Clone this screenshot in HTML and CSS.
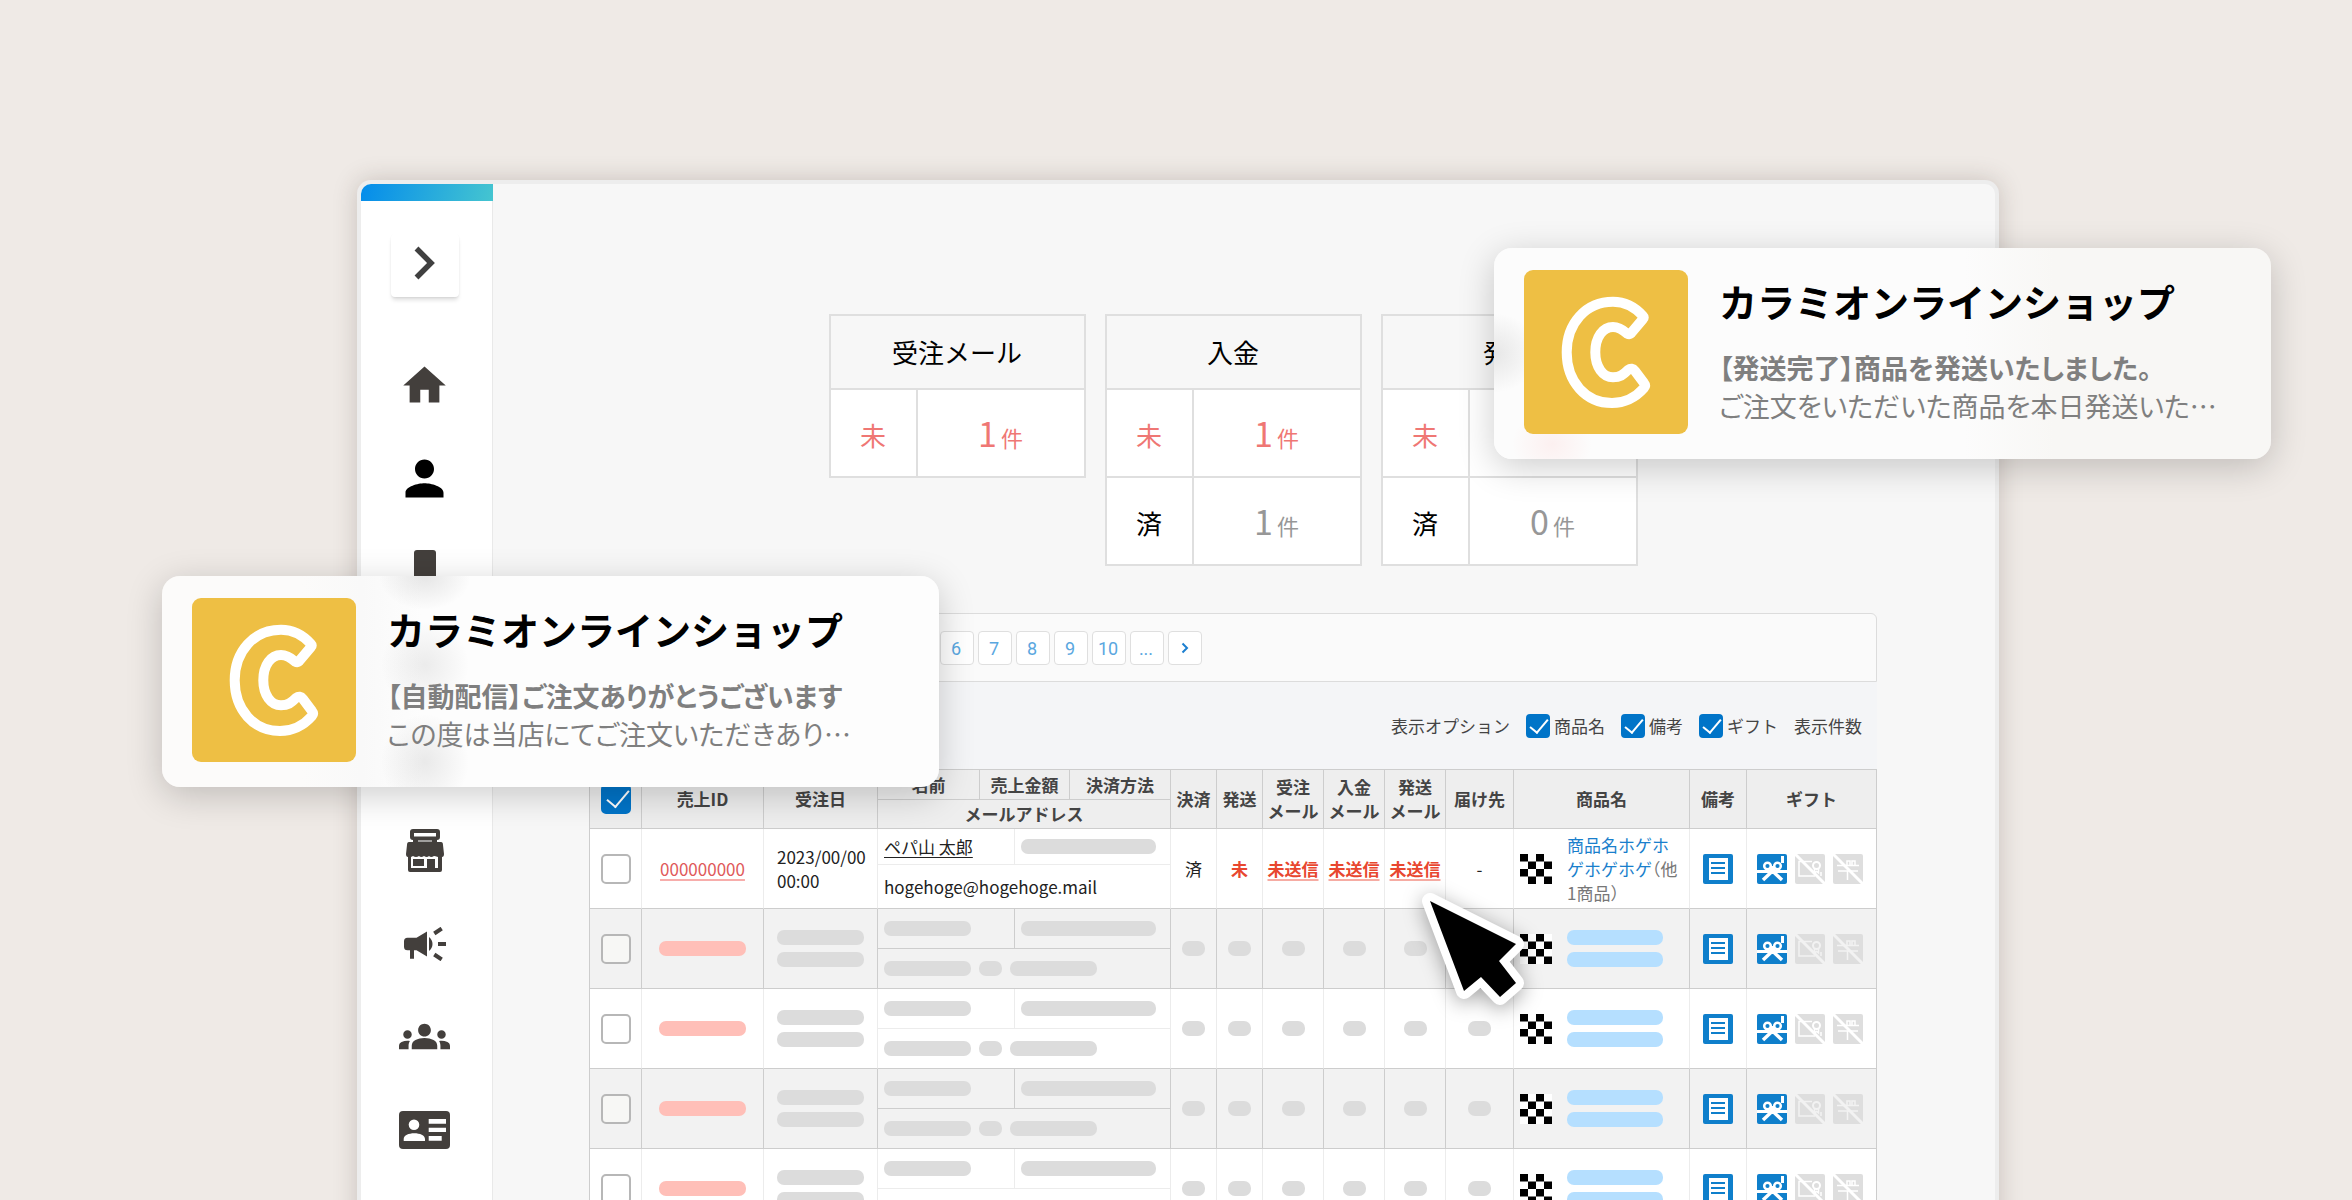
FILE: index.html
```html
<!DOCTYPE html>
<html lang="ja">
<head>
<meta charset="utf-8">
<meta name="viewport" content="width=device-width, initial-scale=1">
<title>売上一覧</title>
<link rel="stylesheet" href="styles.css">
</head>
<body>
<svg class="sprite" aria-hidden="true">
  <symbol id="i-logo" viewBox="0 0 164 164">
    <path d="M119 46C111 37 101 31.700 89 31.700C62 31.700 42.700 53 42.700 82.300C42.700 112 62 133 88 133C101 133 112 127 120 118Q122 115.500 120 113L111 101Q108 97 104 100C99 105 96 107.300 89 107.300C79 107.300 71.300 97 71.300 82.300C71.300 67 79 57 89 57C95 57 99 60 103 63.500Q106 65 108 62L119 49Q120.500 47.500 119 46Z" fill="none" stroke="#fff" stroke-width="10" stroke-linejoin="round"/>
  </symbol>
  <symbol id="i-checker" viewBox="0 0 32 32" preserveAspectRatio="none">
    <path fill="#fff" d="M0 0h32v32H0z"/>
    <path d="M0 0h8v8H0zM16 0h8v8h-8zM8 8h8v8H8zM24 8h8v8h-8zM0 16h8v8H0zM16 16h8v8h-8zM8 24h8v8H8zM24 24h8v8h-8z"/>
  </symbol>
  <symbol id="i-memo" viewBox="0 0 30 30">
    <rect width="30" height="30" rx="2" fill="#0f7fcb"/>
    <path fill="#fff" d="M6 4h19v22H6z"/>
    <path stroke="#0f7fcb" stroke-width="2" d="M8 9h14M8 14h14M8 19h14"/>
  </symbol>
  <symbol id="i-wrap" viewBox="0 0 30 30">
    <rect width="30" height="30" rx="2" fill="#0f7fcb"/>
    <g fill="none" stroke="#fff">
      <path stroke-width="3" d="M0 17.500h30"/>
      <path stroke-width="3.500" d="M15.500 17L6 26M15.500 17L25 26"/>
      <circle cx="10.500" cy="12" r="3.300" stroke-width="2.500"/>
      <circle cx="20.500" cy="12" r="3.300" stroke-width="2.500"/>
    </g>
    <path fill="#fff" d="M13 12h5v8h-5zM24 2h3v7h-3z"/>
  </symbol>
  <symbol id="i-card-off" viewBox="0 0 30 30">
    <rect width="30" height="30" rx="2" fill="#dedede"/>
    <g fill="none" stroke="currentColor">
      <path stroke-width="1.500" d="M17 7.500H4V22h16M26 18v4"/>
      <circle cx="21.500" cy="11.500" r="3.500" stroke-width="2"/>
      <path stroke-width="1.500" d="M19.500 15v4l2-1.500 2 1.500v-4"/>
      <path stroke-width="3" d="M0 0l30 30"/>
    </g>
  </symbol>
  <symbol id="i-box-off" viewBox="0 0 30 30">
    <rect width="30" height="30" rx="2" fill="#dedede"/>
    <g fill="none" stroke="currentColor">
      <path stroke-width="1.500" d="M4 11.500h22M5 17h20M14.500 17v9"/>
      <path stroke-width="1.500" d="M14 11V7h3v4M19 11V7h3v4"/>
      <path stroke-width="3" d="M0 0l30 30"/>
    </g>
  </symbol>
</svg>

<main class="scene">
  <div class="window">
    <aside class="sidebar">
      <button class="toggle" type="button" aria-label="メニューを開く">
        <svg width="22" height="34" viewBox="0 0 22 34"><path d="M2.500 2.500l14.500 14.500L2.500 31.500" fill="none" stroke="#404040" stroke-width="5.500"/></svg>
      </button>
      <nav class="menu" aria-label="メインメニュー">
        <a href="#" aria-label="ホーム"><svg width="51" height="51" viewBox="0 0 24 24"><path d="M10 20v-6h4v6h5v-8h3L12 3 2 12h3v8z"/></svg></a>
        <a class="current" href="#" aria-label="顧客"><svg width="57" height="57" viewBox="0 0 24 24"><path d="M12 12c2.210 0 4-1.790 4-4s-1.790-4-4-4-4 1.790-4 4 1.790 4 4 4zm0 2c-2.670 0-8 1.340-8 4v2h16v-2c0-2.660-5.330-4-8-4z"/></svg></a>
        <a href="#" aria-label="モバイル"><svg width="22" height="44" viewBox="0 0 22 44"><rect width="22" height="44" rx="3"/></svg></a>
        <a href="#" aria-label="商品"><svg width="40" height="40" viewBox="0 0 40 40"><rect width="40" height="40" rx="4"/></svg></a>
        <a href="#" aria-label="売上"><svg width="36" height="46" viewBox="0 0 36 46"><rect width="36" height="46" rx="4"/></svg></a>
        <a href="#" aria-label="ショップ"><svg width="38" height="43" viewBox="0 0 38 43"><path fill-rule="evenodd" d="M7 0h24q3 0 3 3v5q0 3-3 3v2h4q2 0 2 3l1 9q0 3-2 3v13q0 2-2 2H4q-2 0-2-2V28q-2 0-2-3l1-9q0-3 2-3h4v-2q-3 0-3-3V3q0-3 3-3zM8 4v3.500h22V4zM12 11.500v1h14v-1zM5 28v11h16v-9h8v9h3V28q-3-1-4-1-3 2-5 0-2 2-5 0-3 2-5 0-3 2-6 0zM7 30h11v7H7z"/></svg></a>
        <a href="#" aria-label="プロモーション"><svg width="42" height="34" viewBox="0 0 42 34"><path d="M3.500 10.700h9L23 4.500v25L12.500 23.300H10v8.400H6v-8.400H3.500Q0 23.300 0 19.800v-5.600q0-3.500 3.500-3.500zM25 10q3.500 3 3.500 7T25 24z"/><path fill="none" stroke="#433f3c" stroke-width="4" d="M30.300 6.500l7.400-5M34 17h8M30.300 27.500l7.400 5"/></svg></a>
        <a href="#" aria-label="グループ"><svg width="51" height="51" viewBox="0 0 24 24"><path d="M12 12.750c1.630 0 3.070.39 4.240.9 1.080.48 1.760 1.560 1.760 2.730V18H6v-1.610c0-1.180.68-2.260 1.760-2.730 1.170-.52 2.610-.91 4.240-.91zM4 13c1.100 0 2-.9 2-2s-.9-2-2-2-2 .9-2 2 .9 2 2 2zm1.130 1.100c-.37-.06-.74-.1-1.130-.1-.99 0-1.930.21-2.780.58C.48 14.900 0 15.620 0 16.430V18h4.500v-1.610c0-.83.23-1.610.63-2.290zM20 13c1.100 0 2-.9 2-2s-.9-2-2-2-2 .9-2 2 .9 2 2 2zm4 3.430c0-.81-.48-1.530-1.220-1.850-.85-.37-1.790-.58-2.780-.58-.39 0-.76.04-1.130.1.4.68.63 1.460.63 2.290V18H24v-1.570zM12 6c1.660 0 3 1.340 3 3s-1.340 3-3 3-3-1.340-3-3 1.340-3 3-3z"/></svg></a>
        <a href="#" aria-label="会員"><svg width="51" height="38" viewBox="0 0 51 38"><rect width="51" height="38" rx="4"/><path fill="#fff" d="M29.700 8H47v4.700H29.700zM29.700 16.700H47V21H29.700zM29.700 25h13v4.700h-13zM4.700 30v-2c0-3.600 5-5.700 10.600-5.700S26 24.400 26 28v2z"/><circle fill="#fff" cx="15" cy="13.700" r="5.300"/></svg></a>
      </nav>
    </aside>

    <section class="content">
      <div class="summary">
        <table class="status">
          <colgroup><col class="w-label"><col></colgroup>
          <thead><tr><th colspan="2" scope="colgroup">受注メール</th></tr></thead>
          <tbody><tr class="pending"><th scope="row">未</th><td><b>1</b><small>件</small></td></tr></tbody>
        </table>
        <table class="status">
          <colgroup><col class="w-label"><col></colgroup>
          <thead><tr><th colspan="2" scope="colgroup">入金</th></tr></thead>
          <tbody>
            <tr class="pending"><th scope="row">未</th><td><b>1</b><small>件</small></td></tr>
            <tr><th scope="row">済</th><td><b>1</b><small>件</small></td></tr>
          </tbody>
        </table>
        <table class="status">
          <colgroup><col class="w-label"><col></colgroup>
          <thead><tr><th colspan="2" scope="colgroup">発送</th></tr></thead>
          <tbody>
            <tr class="pending"><th scope="row">未</th><td><b>1</b><small>件</small></td></tr>
            <tr><th scope="row">済</th><td><b>0</b><small>件</small></td></tr>
          </tbody>
        </table>
      </div>

      <nav class="pager" aria-label="ページ">
        <a href="#">6</a><a href="#">7</a><a href="#">8</a><a href="#">9</a><a href="#">10</a><a href="#">...</a>
        <a href="#" aria-label="次へ"><svg width="8" height="12" viewBox="0 0 8 12"><path d="M1.500 1.500L6 6l-4.500 4.500" fill="none" stroke="#1c7fd0" stroke-width="2"/></svg></a>
      </nav>

      <div class="options">
        <span class="options-title">表示オプション</span>
        <label><input type="checkbox" checked>商品名</label>
        <label><input type="checkbox" checked>備考</label>
        <label><input type="checkbox" checked>ギフト</label>
        <span>表示件数</span>
      </div>

      <table class="orders">
        <colgroup>
          <col class="w-check"><col class="w-id"><col class="w-date"><col class="w-name"><col class="w-s1"><col class="w-s2"><col class="w-pay"><col class="w-flag"><col class="w-flag"><col class="w-mail"><col class="w-mail"><col class="w-mail"><col class="w-to"><col class="w-item"><col class="w-memo"><col class="w-gift">
        </colgroup>
        <thead>
          <tr>
            <th rowspan="2"><input type="checkbox" checked aria-label="すべて選択"></th>
            <th rowspan="2">売上ID</th>
            <th rowspan="2">受注日</th>
            <th>名前</th>
            <th colspan="2">売上金額</th>
            <th>決済方法</th>
            <th rowspan="2">決済</th>
            <th rowspan="2">発送</th>
            <th rowspan="2">受注<br>メール</th>
            <th rowspan="2">入金<br>メール</th>
            <th rowspan="2">発送<br>メール</th>
            <th rowspan="2">届け先</th>
            <th rowspan="2">商品名</th>
            <th rowspan="2">備考</th>
            <th rowspan="2">ギフト</th>
          </tr>
          <tr><th colspan="4">メールアドレス</th></tr>
        </thead>
        <tbody class="filled">
          <tr>
            <td rowspan="2"><input type="checkbox" aria-label="注文を選択"></td>
            <td rowspan="2"><a class="id" href="#">000000000</a></td>
            <td rowspan="2" class="date">2023/00/00<br>00:00</td>
            <td colspan="2" class="who"><a class="name" href="#">ペパ山 太郎</a></td>
            <td colspan="2" class="who"><i class="bar wide"></i></td>
            <td rowspan="2">済</td>
            <td rowspan="2" class="alert">未</td>
            <td rowspan="2"><a class="alert" href="#">未送信</a></td>
            <td rowspan="2"><a class="alert" href="#">未送信</a></td>
            <td rowspan="2"><a class="alert" href="#">未送信</a></td>
            <td rowspan="2">-</td>
            <td rowspan="2"><div class="item"><svg><use href="#i-checker"/></svg><p><a href="#">商品名ホゲホゲホゲホゲ</a>（他1商品）</p></div></td>
            <td rowspan="2"><svg class="ico"><use href="#i-memo"/></svg></td>
            <td rowspan="2"><div class="gifts"><svg class="ico"><use href="#i-wrap"/></svg><svg class="ico"><use href="#i-card-off"/></svg><svg class="ico"><use href="#i-box-off"/></svg></div></td>
          </tr>
          <tr><td colspan="4" class="who">hogehoge@hogehoge.mail</td></tr>
        </tbody>
        <tbody>
          <tr>
            <td rowspan="2"><input type="checkbox" aria-label="注文を選択"></td>
            <td rowspan="2"><i class="bar pink"></i></td>
            <td rowspan="2" class="date"><div class="pair"><i class="bar"></i><i class="bar"></i></div></td>
            <td colspan="2" class="who"><i class="bar"></i></td>
            <td colspan="2" class="who"><i class="bar wide"></i></td>
            <td rowspan="2"><i class="bar dot"></i></td><td rowspan="2"><i class="bar dot"></i></td><td rowspan="2"><i class="bar dot"></i></td><td rowspan="2"><i class="bar dot"></i></td><td rowspan="2"><i class="bar dot"></i></td><td rowspan="2"><i class="bar dot"></i></td>
            <td rowspan="2"><div class="item"><svg><use href="#i-checker"/></svg><div class="pair"><i class="bar blue"></i><i class="bar blue"></i></div></div></td>
            <td rowspan="2"><svg class="ico"><use href="#i-memo"/></svg></td>
            <td rowspan="2"><div class="gifts"><svg class="ico"><use href="#i-wrap"/></svg><svg class="ico"><use href="#i-card-off"/></svg><svg class="ico"><use href="#i-box-off"/></svg></div></td>
          </tr>
          <tr><td colspan="4" class="who"><div class="mail"><i class="bar"></i><i class="bar dot"></i><i class="bar"></i></div></td></tr>
        </tbody>
        <tbody>
          <tr>
            <td rowspan="2"><input type="checkbox" aria-label="注文を選択"></td>
            <td rowspan="2"><i class="bar pink"></i></td>
            <td rowspan="2" class="date"><div class="pair"><i class="bar"></i><i class="bar"></i></div></td>
            <td colspan="2" class="who"><i class="bar"></i></td>
            <td colspan="2" class="who"><i class="bar wide"></i></td>
            <td rowspan="2"><i class="bar dot"></i></td><td rowspan="2"><i class="bar dot"></i></td><td rowspan="2"><i class="bar dot"></i></td><td rowspan="2"><i class="bar dot"></i></td><td rowspan="2"><i class="bar dot"></i></td><td rowspan="2"><i class="bar dot"></i></td>
            <td rowspan="2"><div class="item"><svg><use href="#i-checker"/></svg><div class="pair"><i class="bar blue"></i><i class="bar blue"></i></div></div></td>
            <td rowspan="2"><svg class="ico"><use href="#i-memo"/></svg></td>
            <td rowspan="2"><div class="gifts"><svg class="ico"><use href="#i-wrap"/></svg><svg class="ico"><use href="#i-card-off"/></svg><svg class="ico"><use href="#i-box-off"/></svg></div></td>
          </tr>
          <tr><td colspan="4" class="who"><div class="mail"><i class="bar"></i><i class="bar dot"></i><i class="bar"></i></div></td></tr>
        </tbody>
        <tbody>
          <tr>
            <td rowspan="2"><input type="checkbox" aria-label="注文を選択"></td>
            <td rowspan="2"><i class="bar pink"></i></td>
            <td rowspan="2" class="date"><div class="pair"><i class="bar"></i><i class="bar"></i></div></td>
            <td colspan="2" class="who"><i class="bar"></i></td>
            <td colspan="2" class="who"><i class="bar wide"></i></td>
            <td rowspan="2"><i class="bar dot"></i></td><td rowspan="2"><i class="bar dot"></i></td><td rowspan="2"><i class="bar dot"></i></td><td rowspan="2"><i class="bar dot"></i></td><td rowspan="2"><i class="bar dot"></i></td><td rowspan="2"><i class="bar dot"></i></td>
            <td rowspan="2"><div class="item"><svg><use href="#i-checker"/></svg><div class="pair"><i class="bar blue"></i><i class="bar blue"></i></div></div></td>
            <td rowspan="2"><svg class="ico"><use href="#i-memo"/></svg></td>
            <td rowspan="2"><div class="gifts"><svg class="ico"><use href="#i-wrap"/></svg><svg class="ico"><use href="#i-card-off"/></svg><svg class="ico"><use href="#i-box-off"/></svg></div></td>
          </tr>
          <tr><td colspan="4" class="who"><div class="mail"><i class="bar"></i><i class="bar dot"></i><i class="bar"></i></div></td></tr>
        </tbody>
        <tbody>
          <tr>
            <td rowspan="2"><input type="checkbox" aria-label="注文を選択"></td>
            <td rowspan="2"><i class="bar pink"></i></td>
            <td rowspan="2" class="date"><div class="pair"><i class="bar"></i><i class="bar"></i></div></td>
            <td colspan="2" class="who"><i class="bar"></i></td>
            <td colspan="2" class="who"><i class="bar wide"></i></td>
            <td rowspan="2"><i class="bar dot"></i></td><td rowspan="2"><i class="bar dot"></i></td><td rowspan="2"><i class="bar dot"></i></td><td rowspan="2"><i class="bar dot"></i></td><td rowspan="2"><i class="bar dot"></i></td><td rowspan="2"><i class="bar dot"></i></td>
            <td rowspan="2"><div class="item"><svg><use href="#i-checker"/></svg><div class="pair"><i class="bar blue"></i><i class="bar blue"></i></div></div></td>
            <td rowspan="2"><svg class="ico"><use href="#i-memo"/></svg></td>
            <td rowspan="2"><div class="gifts"><svg class="ico"><use href="#i-wrap"/></svg><svg class="ico"><use href="#i-card-off"/></svg><svg class="ico"><use href="#i-box-off"/></svg></div></td>
          </tr>
          <tr><td colspan="4" class="who"><div class="mail"><i class="bar"></i><i class="bar dot"></i><i class="bar"></i></div></td></tr>
        </tbody>
      </table>
    </section>
  </div>

  <svg class="pointer" width="120" height="130" viewBox="0 0 120 130" aria-hidden="true">
    <path d="M20 21l86 43-17 17 17 22-16 14-19-20-17 14z" fill="#fff" stroke="#fff" stroke-width="16" stroke-linejoin="round"/>
    <path d="M20 21l86 43-17 17 17 22-16 14-19-20-17 14z"/>
  </svg>

  <article class="notice ordered">
    <svg class="logo"><use href="#i-logo"/></svg>
    <div>
      <h2>カラミオンラインショップ</h2>
      <p class="subject">【自動配信】ご注文ありがとうございます</p>
      <p>この度は当店にてご注文いただきあり…</p>
    </div>
  </article>

  <article class="notice shipped">
    <svg class="logo"><use href="#i-logo"/></svg>
    <div>
      <h2>カラミオンラインショップ</h2>
      <p class="subject">【発送完了】商品を発送いたしました。</p>
      <p>ご注文をいただいた商品を本日発送いた…</p>
    </div>
  </article>
</main>
</body>
</html>
```
FILE: styles.css
```css
* {
  box-sizing: border-box;
}

body {
  margin: 0;
  background: #efeae6;
  color: #222;
  font: 17px/24px "Noto Sans CJK JP", sans-serif;
}

h2,
p {
  margin: 0;
}

a {
  color: inherit;
  text-decoration: none;
}

.sprite {
  position: absolute;
  width: 0;
  height: 0;
}

.scene {
  position: relative;
  height: 100vh;
  overflow: hidden;
  padding: 180px 353px 0 357px;
}

/* Admin window */

.window {
  display: flex;
  min-height: 100%;
  overflow: hidden;
  background: #f7f7f7;
  border: 4px solid #ededed;
  border-bottom: 0;
  border-radius: 14px 14px 0 0;
  box-shadow: 0 0 24px rgba(70, 50, 40, .22);
}

.sidebar {
  display: flex;
  flex: none;
  flex-direction: column;
  align-items: center;
  width: 132px;
  padding-right: 4px;
  background: #fff;
  border-right: 1px solid #e9e9e9;
}

.sidebar::before {
  content: "";
  flex: none;
  width: 132px;
  height: 17px;
  margin-right: -5px;
  background: linear-gradient(105deg, #048ceb, #45c5d0);
}

.toggle {
  display: flex;
  align-items: center;
  justify-content: center;
  flex: none;
  width: 68px;
  height: 63px;
  margin: 33px 0 42px;
  padding: 0 0 6px;
  background: #fff;
  border: 0;
  border-radius: 4px;
  box-shadow: 0 4px 4px -1px rgba(0, 0, 0, .13), 0 1px 2px rgba(0, 0, 0, .06);
}

.menu a {
  display: flex;
  align-items: center;
  justify-content: center;
  height: 93px;
}

.menu svg {
  fill: #433f3c;
}

.menu .current svg {
  fill: #000;
}

.content {
  flex: 1;
  min-width: 0;
  padding: 130px 118px 0 96px;
}

/* Status summary */

.summary {
  display: flex;
  align-items: flex-start;
  justify-content: center;
  gap: 19px;
  min-height: 299px;
}

.status {
  width: 257px;
  table-layout: fixed;
  border-collapse: collapse;
  color: #000;
  font-size: 26px;
  line-height: 36px;
  text-align: center;
}

.w-label {
  width: 87px;
}

.status th,
.status td {
  height: 88px;
  padding: 4px 0 0;
  border: 2px solid #dfdfdf;
  background: #fff;
  font-weight: 400;
}

.status thead th {
  height: 74px;
  padding: 0;
  background: #f7f7f7;
}

.status td {
  color: #979797;
}

.status b {
  font-size: 34px;
  font-weight: 400;
}

.status small {
  margin-left: 4px;
  font-size: 22px;
}

.status .pending > * {
  color: #ef7774;
}

/* Pager and display options */

.pager {
  display: flex;
  align-items: center;
  gap: 4px;
  height: 69px;
  padding-left: 350px;
  background: #fafafa;
  border: 1px solid #dcdcdc;
  border-radius: 6px 6px 0 0;
}

.pager a {
  display: flex;
  align-items: center;
  justify-content: center;
  width: 34px;
  height: 34px;
  padding: 3px 2px 0 0;
  background: #fff;
  border: 1px solid #dfdfdf;
  border-radius: 4px;
  color: #5aa7df;
  font: 18px/24px Roboto, sans-serif;
}

.pager a:last-child {
  padding: 0;
}

.options {
  display: flex;
  align-items: center;
  justify-content: flex-end;
  gap: 16px;
  height: 87px;
  padding-right: 15px;
  background: #f4f5f7;
  color: #444;
}

.options label {
  display: flex;
  align-items: center;
  gap: 4px;
}

/* Tick boxes */

input[type="checkbox"] {
  display: block;
  position: relative;
  width: 30px;
  height: 30px;
  margin: 0 auto;
  appearance: none;
  border: 2px solid #b7b7b7;
  border-radius: 5px;
}

input[type="checkbox"]:checked {
  background: #0074c8;
  border-color: #0074c8;
}

input[type="checkbox"]:checked::after {
  content: "";
  position: absolute;
  left: 4px;
  top: 4px;
  width: 20px;
  height: 10px;
  border: solid #fff;
  border-width: 0 0 2px 2px;
  rotate: -50deg;
}

.options input[type="checkbox"] {
  width: 24px;
  height: 24px;
  border-radius: 4px;
}

.options input[type="checkbox"]:checked::after {
  left: 2px;
  top: 3px;
  width: 16px;
  height: 8px;
}

/* Orders */

.orders {
  width: 100%;
  table-layout: fixed;
  border: solid #cdcdcd;
  border-width: 1px 0 0 1px;
  border-spacing: 0;
  text-align: center;
}

.w-check { width: 52px; }
.w-id { width: 122px; }
.w-date { width: 114px; }
.w-name { width: 102px; }
.w-s1 { width: 35px; }
.w-s2 { width: 55px; }
.w-pay { width: 101px; }
.w-flag { width: 46px; }
.w-mail { width: 61px; }
.w-to { width: 68px; }
.w-item { width: 176px; }
.w-memo { width: 57px; }

.orders th,
.orders td {
  height: 40px;
  padding: 0;
  border: solid #cdcdcd;
  border-width: 0 1px 1px 0;
  color: #222;
}

.orders thead th {
  height: 30px;
  background: #eee;
  color: #444;
  font-weight: 700;
  white-space: nowrap;
}

.orders thead tr:last-child th {
  height: 29px;
}

.orders tbody:nth-of-type(odd) td {
  border-right-color: #ececec;
  background: #fff;
}

.orders tbody:nth-of-type(even) td {
  background: #f2f2f2;
}

.orders tbody:nth-of-type(odd) td[colspan="2"] {
  border-bottom-color: #ececec;
}

.orders tbody tr:first-child td:last-child {
  border-right-color: #cdcdcd;
}

.orders tbody:nth-of-type(even) input {
  background: #f7f7f5;
}

.orders .filled tr:first-child td {
  height: 36px;
}

.orders .filled tr:last-child td {
  height: 44px;
}

.orders .date {
  padding-left: 13px;
  text-align: left;
}

.orders .who {
  padding-left: 6px;
  text-align: left;
}

.id {
  color: #e0595a;
  text-decoration: underline 2px #f7adab;
  text-underline-offset: 3px;
}

.name {
  text-decoration: underline 1px;
  text-underline-offset: 3px;
}

.orders .alert {
  color: #e8472f;
  font-weight: 700;
}

.orders a.alert {
  text-decoration: underline 2px #f6aca3;
  text-underline-offset: 3px;
}

.bar {
  display: block;
  width: 87px;
  height: 15px;
  border-radius: 7px;
  background: #dcdcdc;
}

td > .bar.dot,
td > .bar.pink {
  margin: 0 auto;
}

.bar.wide {
  width: 135px;
}

.bar.dot {
  width: 23px;
}

.bar.pink {
  background: #ffbfb8;
}

.bar.blue {
  width: 96px;
  background: #b5dfff;
}

.pair {
  display: grid;
  gap: 7px;
}

.mail {
  display: flex;
  gap: 8px;
}

.item {
  display: flex;
  align-items: center;
  gap: 15px;
  padding: 0 6px;
  text-align: left;
}

.item svg {
  flex: none;
  width: 32px;
  height: 30px;
}

.item p {
  color: #777;
  font-feature-settings: "halt";
}

.item a {
  color: #1a7fcc;
}

.ico {
  display: block;
  width: 30px;
  height: 30px;
  margin: 0 auto;
  color: #fff;
}

.orders tbody:nth-of-type(even) .ico {
  color: #f2f2f2;
}

.gifts {
  display: flex;
  gap: 8px;
  padding-left: 10px;
}

.gifts .ico {
  margin: 0;
}

/* Pointer and notifications float over the window */

.pointer {
  position: absolute;
  left: 1410px;
  top: 880px;
  overflow: visible;
  filter: drop-shadow(0 4px 10px rgba(0, 0, 0, .35));
}

.notice {
  position: absolute;
  display: flex;
  align-items: flex-start;
  gap: 31px;
  width: 777px;
  height: 211px;
  padding: 22px 30px;
  border-radius: 18px;
  box-shadow: 0 8px 36px rgba(0, 0, 0, .2);
  color: #7f7f7f;
  font-size: 27px;
  line-height: 38px;
  white-space: nowrap;
}

.notice p {
  font-feature-settings: "palt";
}

/* Frosted glass: soft traces of the menu and tables behind each card */

.notice.ordered {
  left: 162px;
  top: 576px;
  background:
    radial-gradient(ellipse 46px 34px at 263px 0, rgba(60, 60, 60, .12), transparent),
    radial-gradient(ellipse 44px 44px at 263px 89px, rgba(60, 60, 60, .09), transparent),
    radial-gradient(ellipse 44px 48px at 263px 186px, rgba(60, 60, 60, .1), transparent),
    linear-gradient(90deg, #fcfbfa 140px, #f9f9f9 200px, #fdfdfd 260px, #fdfdfd);
}

.notice.shipped {
  right: 81px;
  top: 248px;
  background:
    radial-gradient(ellipse 44px 40px at 0 105px, rgba(40, 40, 40, .1), transparent),
    radial-gradient(ellipse 40px 34px at 58px 196px, rgba(255, 120, 120, .09), transparent),
    linear-gradient(90deg, #fcfcfc 470px, #f8f7f5 560px);
}

.notice h2 {
  margin: 6px 0 23px;
  color: #000;
  font-size: 38px;
  line-height: 50px;
}

.notice .subject {
  font-weight: 700;
}

.logo {
  flex: none;
  width: 164px;
  height: 164px;
  border-radius: 9px;
  background: #eebf44;
}
```
